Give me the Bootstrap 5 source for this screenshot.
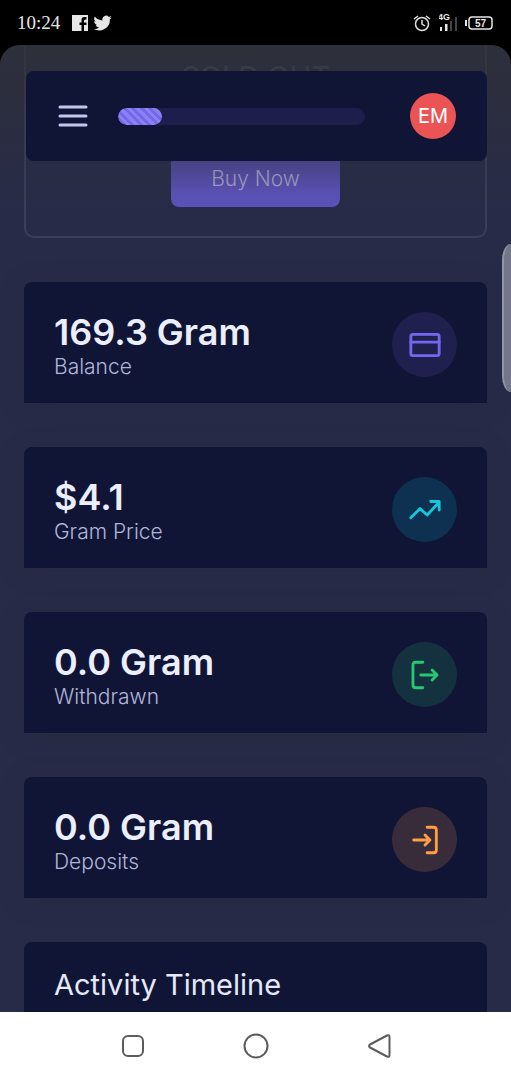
<!DOCTYPE html>
<html lang="en">
<head>
<meta charset="utf-8">
<meta name="viewport" content="width=device-width, initial-scale=1">
<title>Gram Dashboard</title>
<link href="https://cdn.jsdelivr.net/npm/bootstrap@5.3.0/dist/css/bootstrap.min.css" rel="stylesheet">
<style>
  body { font-family: Inter, "Open Sans", sans-serif; background: #000; color: #b8bde0; }
  .status-bar { height: 45px; padding: 0 18px 0 17px; color: #e6e6e6; }
  .clock { font: 19px/24px "Liberation Serif", serif; }
  .notices { margin-left: 11px; }
  .screen { background: #272b48; border-radius: 20px 20px 0 0; min-height: 0; }
  .page-column { padding: 0 24px; gap: 44px; }
  .offer { height: 193px; padding: 16px 24px 29px; border: 2px solid #3b3e5a; border-top: 0; border-radius: 0 0 10px 10px; }
  .offer h2 { font-size: 29px; line-height: 32px; font-weight: 400; color: #4c4e5a; margin: 0; }
  .btn-buy { --bs-btn-color: #a9a6cc; --bs-btn-bg: #5b52ba; --bs-btn-hover-bg: #6a61cc; --bs-btn-hover-color: #fff; background-image: linear-gradient(#4b4490, #5d53bf 75%); width: 169px; height: 57px; border: 0; border-radius: 8px; font-size: 21px; font-weight: 300; }
  .top-shade { height: 170px; background: linear-gradient(rgba(48,49,54,.75), rgba(48,49,54,0)); pointer-events: none; }
  .floating-nav { top: 26px; left: 26px; right: 24px; height: 90px; padding: 0 31px 0 32px; background: #101536; border-radius: 8px; }
  .menu-btn { width: 30px; height: 30px; color: #c2c6ec; line-height: 0; }
  .floating-nav .progress { height: 17px; margin: 0 45px 0 30px; border-radius: 9px; background: #1d1e4c; }
  .floating-nav .progress-bar { border-radius: 9px; background-color: #7468ee; background-image: repeating-linear-gradient(45deg, #8c81f4 0 3px, #7468ea 3px 6px); }
  .avatar { width: 46px; height: 46px; background: #ea5455; color: #fff; font-size: 20px; }
  .stat { min-height: 121px; padding: 4px 30px 0; background: #101536; border-radius: 8px 8px 0 0; box-shadow: 0 4px 24px rgba(34,41,47,.25); }
  .stat-text { padding-top: 4px; }
  .stat h2 { font-size: 36px; line-height: 40px; font-weight: 600; color: #ebeefd; margin: 0; }
  .stat p { font-size: 21px; line-height: 30px; margin: 0; color: #b0b5da; font-weight: 300; }
  .stat-icon { width: 65px; height: 65px; }
  .stat-icon svg { width: 34px; height: 34px; }
  .line-art { fill: none; stroke: currentColor; stroke-width: 2; stroke-linecap: round; stroke-linejoin: round; }
  .tone-primary { color: #7367f0; background: #20204f; }
  .tone-info { color: #14c6dc; background: #0e3152; }
  .tone-success { color: #28c76f; background: #143140; }
  .tone-warning { color: #ff9f43; background: #382c3b; }
  .timeline { padding: 25px 30px; background: #101536; border-radius: 8px 8px 0 0; min-height: 121px; }
  .timeline h3 { font-size: 29px; line-height: 36px; font-weight: 400; color: #e6e9fa; margin: 0; }
  .edge-handle { right: 0; top: 199px; width: 9px; height: 148px; background: #747789; border-left: 2px solid #9296a5; border-radius: 9px 0 0 9px / 16px 0 0 16px; }
  .system-nav { height: 68px; gap: 91px; background: #fff; color: #5c5c5c; }
  .system-nav .btn { width: 32px; height: 32px; color: inherit; line-height: 0; }
</style>
</head>
<body>
<div class="d-flex flex-column vh-100 overflow-hidden">
  <header class="status-bar d-flex align-items-center flex-shrink-0">
    <span class="clock">10:24</span>
    <svg class="notices me-auto" width="42" height="20" viewBox="0 0 42 20" fill="#e6e6e6" aria-label="Notifications">
      <path fill-rule="evenodd" d="M1 2h16v16h-4v-6h2.500v-2.500H13V8q0-1.500 1.500-1.500h1V4h-2Q10.500 4 10.500 7v2.500h-2V12h2v6H1z"/>
      <path transform="translate(22.500 1) scale(.76)" d="M24 4.600a10 10 0 0 1-2.800.8 5 5 0 0 0 2.100-2.700 10 10 0 0 1-3.100 1.200A4.900 4.900 0 0 0 11.800 8.400 14 14 0 0 1 1.700 3.200a4.900 4.900 0 0 0 1.500 6.600 5 5 0 0 1-2.200-.6 4.900 4.900 0 0 0 3.900 4.900 5 5 0 0 1-2.200.1 4.900 4.900 0 0 0 4.600 3.400A9.900 9.900 0 0 1 0 19.500 14 14 0 0 0 21.500 7.100 10 10 0 0 0 24 4.600z"/>
    </svg>
    <svg width="18" height="18" viewBox="0 0 18 18" fill="none" stroke="#dedede" stroke-width="1.500" aria-label="Alarm"><circle cx="9" cy="10" r="6.500"/><path d="M9 6v4l3 2M1 5l4-3M17 5l-4-3"/></svg>
    <svg class="ms-2" width="18" height="22" viewBox="0 0 18 22" fill="#e6e6e6" aria-label="Signal"><text x="-1" y="8" font-size="9" font-weight="700" font-family="Liberation Sans">4G</text><path d="M1 15h2v4H1zM6 12h2.500v7H6z"/><path fill="#444" d="M11 9h2v10h-2zM16 5h2v14h-2z"/></svg>
    <svg class="ms-2" width="28" height="16" viewBox="0 0 28 16" aria-label="Battery 57 percent"><path fill="#e6e6e6" d="M0 5h2v6H0z"/><rect x="4" y="2" width="23" height="12" rx="3" fill="none" stroke="#e6e6e6" stroke-width="1.500"/><text x="15.500" y="12" text-anchor="middle" font-size="10" font-weight="700" font-family="Liberation Sans" fill="#e6e6e6">57</text></svg>
  </header>

  <main class="screen flex-grow-1 position-relative overflow-hidden">
    <div class="page-column d-flex flex-column">
      <section class="offer d-flex flex-column align-items-center justify-content-between">
        <h2>SOLD OUT</h2>
        <button class="btn btn-buy" type="button">Buy Now</button>
      </section>

      <section class="stat d-flex align-items-center justify-content-between">
        <div class="stat-text"><h2>169.3 Gram</h2><p>Balance</p></div>
        <span class="stat-icon tone-primary rounded-circle d-flex align-items-center justify-content-center"><svg class="line-art" viewBox="0 0 24 24"><rect x="2" y="4.500" width="20" height="15" rx="1.500"/><path d="M2 10h20"/></svg></span>
      </section>
      <section class="stat d-flex align-items-center justify-content-between">
        <div class="stat-text"><h2>$4.1</h2><p>Gram Price</p></div>
        <span class="stat-icon tone-info rounded-circle d-flex align-items-center justify-content-center"><svg class="line-art" viewBox="0 0 24 24"><path d="M2 17.500 8.500 11l5 4.500L22 6.500M16 6h6v6"/></svg></span>
      </section>
      <section class="stat d-flex align-items-center justify-content-between">
        <div class="stat-text"><h2>0.0 Gram</h2><p>Withdrawn</p></div>
        <span class="stat-icon tone-success rounded-circle d-flex align-items-center justify-content-center"><svg class="line-art" viewBox="0 0 24 24"><path d="M10.500 3H5.500Q3.500 3 3.500 5v14q0 2 2 2h5M9 12h11.500M17 8.500 20.500 12 17 15.500"/></svg></span>
      </section>
      <section class="stat d-flex align-items-center justify-content-between">
        <div class="stat-text"><h2>0.0 Gram</h2><p>Deposits</p></div>
        <span class="stat-icon tone-warning rounded-circle d-flex align-items-center justify-content-center"><svg class="line-art" viewBox="0 0 24 24"><path d="M13.500 3h4.500q2 0 2 2v14q0 2-2 2h-4.500M4 12h11.500M12 8.500 15.500 12 12 15.500"/></svg></span>
      </section>

      <section class="timeline"><h3>Activity Timeline</h3></section>
    </div>

    <div class="top-shade position-absolute top-0 start-0 end-0"></div>
    <nav class="floating-nav position-absolute d-flex align-items-center">
      <button class="menu-btn btn p-0 border-0" type="button" aria-label="Menu"><svg width="30" height="30" viewBox="0 0 30 30" stroke="currentColor" stroke-width="3" stroke-linecap="round"><path d="M2 6h26M2 15h26M2 24h26"/></svg></button>
      <div class="progress flex-grow-1" role="progressbar" aria-label="Progress" aria-valuenow="18" aria-valuemin="0" aria-valuemax="100"><div class="progress-bar" style="width:18%"></div></div>
      <span class="avatar rounded-circle d-flex align-items-center justify-content-center">EM</span>
    </nav>
    <div class="edge-handle position-absolute"></div>
  </main>

  <footer class="system-nav d-flex align-items-center justify-content-center flex-shrink-0">
    <button class="btn p-0 border-0" type="button" aria-label="Recent apps"><svg class="line-art" width="32" height="32" viewBox="0 0 32 32"><rect x="6" y="6" width="20" height="20" rx="5"/></svg></button>
    <button class="btn p-0 border-0" type="button" aria-label="Home"><svg class="line-art" width="32" height="32" viewBox="0 0 32 32"><circle cx="16" cy="16" r="11.500"/></svg></button>
    <button class="btn p-0 border-0" type="button" aria-label="Back"><svg class="line-art" width="32" height="32" viewBox="0 0 32 32"><path d="M24 5.500Q26.500 4.500 26.500 7v18q0 2.500-2.500 1.500L7 17.500q-2-1.500 0-3z"/></svg></button>
  </footer>
</div>
<script src="https://cdn.jsdelivr.net/npm/bootstrap@5.3.0/dist/js/bootstrap.bundle.min.js"></script>
</body>
</html>
